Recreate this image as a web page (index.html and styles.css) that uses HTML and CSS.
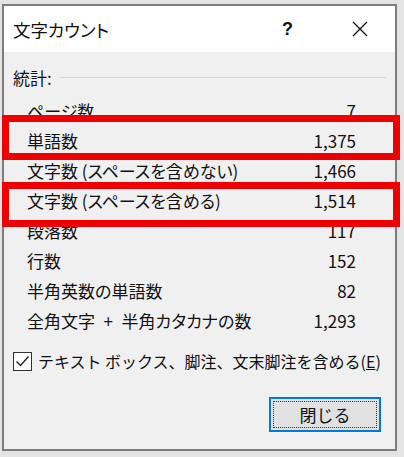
FILE: index.html
```html
<!DOCTYPE html>
<html lang="ja">
<head>
    <meta charset="UTF-8">
    <title>文字カウント</title>
    <link rel="stylesheet" href="styles.css">
</head>
<body>
    <div class="dialog">
        <div class="titlebar">
            <span class="title">文字カウント</span>
            <span class="help">?</span>
            <span class="close">
                <svg width="16" height="16" viewBox="0 0 16 16"><path d="M1 1 L15 15 M15 1 L1 15" stroke="#111" stroke-width="1.3" fill="none"/></svg>
            </span>
        </div>

        <div class="content">
            <div class="group-head">
                <span>統計:</span>
                <span class="rule"></span>
            </div>
            <div class="stats">
                <div class="row"><span>ページ数</span><span>7</span></div>
                <div class="row"><span>単語数</span><span>1,375</span></div>
                <div class="row"><span>文字数 (スペースを含めない)</span><span>1,466</span></div>
                <div class="row"><span>文字数 (スペースを含める)</span><span>1,514</span></div>
                <div class="row"><span>段落数</span><span>117</span></div>
                <div class="row"><span>行数</span><span>152</span></div>
                <div class="row"><span>半角英数の単語数</span><span>82</span></div>
                <div class="row"><span>全角文字&ensp;+&ensp;半角カタカナの数</span><span>1,293</span></div>
            </div>

            <label class="check">
                <svg width="19" height="19" viewBox="0 0 19 19"><rect x="0.5" y="0.5" width="18" height="18" fill="#fff" stroke="#333"/><path d="M3.5 9.5 L7.5 13.5 L15.5 4.5" stroke="#222" stroke-width="1.4" fill="none"/></svg>
                <span>テキスト ボックス、脚注、文末脚注を含める(<u>E</u>)</span>
            </label>

            <div class="actions">
                <button class="close-btn"><span>閉じる</span></button>
            </div>
        </div>

        <div class="mark mark-words"></div>
        <div class="mark mark-chars"></div>
    </div>
</body>
</html>
```

FILE: styles.css
```css
body {
    margin: 0;
    padding: 0;
    background-color: #e4e4e4;
    font-family: "Noto Sans CJK JP", "Noto Sans", sans-serif;
    font-feature-settings: "palt";
    color: #111;
}

.dialog {
    position: relative;
    margin: 4px 7px 6px 2px;
    height: 443px;
    border: 2px solid #7d7d7d;
    background-color: #f0f0f0;
}

.titlebar {
    display: flex;
    align-items: center;
    height: 46px;
    padding: 0 0 0 9px;
    background-color: #fff;
    font-size: 17.5px;
}

.titlebar .title {
    flex: 1;
}

.titlebar .help {
    width: 30px;
    font-size: 18px;
    font-weight: bold;
    font-family: "Liberation Sans", sans-serif;
}

.titlebar .close {
    display: flex;
    width: 16px;
    margin: 0 27px 0 40px;
}

.content {
    padding: 10px 9px 0 9px;
}

.group-head {
    display: flex;
    align-items: center;
    height: 30px;
    font-size: 17px;
}

.group-head .rule {
    flex: 1;
    height: 1px;
    margin-left: 8px;
    background-color: #d7d7d7;
}

.stats {
    margin-top: 4px;
    padding: 0 30px 0 14px;
}

.row {
    display: flex;
    justify-content: space-between;
    height: 30px;
    line-height: 30px;
    font-size: 17px;
}

.check {
    display: flex;
    align-items: center;
    gap: 6px;
    margin-top: 10px;
    height: 30px;
    font-size: 16px;
    font-feature-settings: normal;
}

.check svg {
    flex: none;
}

.actions {
    display: flex;
    justify-content: flex-end;
    margin-top: 21px;
    padding-right: 5px;
}

.close-btn {
    width: 112px;
    height: 35px;
    padding: 2px;
    border: 2px solid #0078d7;
    background-color: #e1e1e1;
    font-family: inherit;
    font-size: 17px;
    color: #111;
}

.close-btn span {
    display: flex;
    align-items: center;
    justify-content: center;
    height: 100%;
    border: 1px dotted #333;
    box-sizing: border-box;
}

.mark {
    position: absolute;
    left: -2px;
    width: 384px;
    height: 31px;
    border: 7px solid #ee0000;
}

.mark-words {
    top: 109px;
}

.mark-chars {
    top: 176px;
}
```
